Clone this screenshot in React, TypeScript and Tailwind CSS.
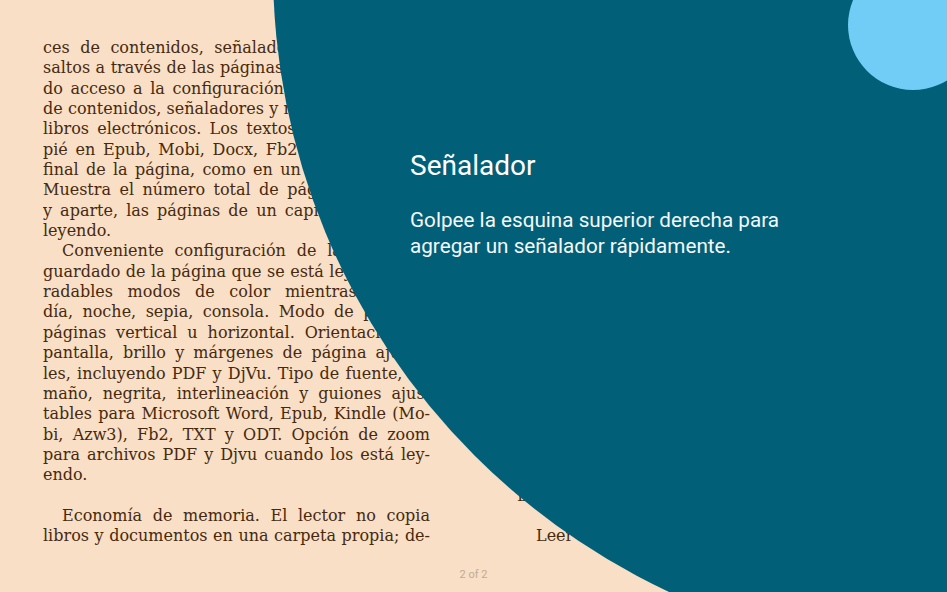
import React from "react";

type Line = { t: string; j?: boolean; indent?: boolean };

const leftLines: Line[] = [
  { t: "ces de contenidos, señaladores y notas. Los", j: true },
  { t: "saltos a través de las páginas y capítulos. Rápi-", j: true },
  { t: "do acceso a la configuración de lectura, tabla", j: true },
  { t: "de contenidos, señaladores y notas de todos los", j: true },
  { t: "libros electrónicos. Los textos de las notas al", j: true },
  { t: "pié en Epub, Mobi, Docx, Fb2 se muestran al", j: true },
  { t: "final de la página, como en un libro de papel.", j: true },
  { t: "Muestra el número total de páginas del libro", j: true },
  { t: "y aparte, las páginas de un capítulo que está", j: true },
  { t: "leyendo.", j: false },
  { t: "Conveniente configuración de la lectura y", j: true, indent: true },
  { t: "guardado de la página que se está leyendo. Ag-", j: true },
  { t: "radables modos de color mientras lee: el", j: true },
  { t: "día, noche, sepia, consola. Modo de paso de", j: true },
  { t: "páginas vertical u horizontal. Orientación de", j: true },
  { t: "pantalla, brillo y márgenes de página ajusta-", j: true },
  { t: "les, incluyendo PDF y DjVu. Tipo de fuente, ta-", j: true },
  { t: "maño, negrita, interlineación y guiones ajus-", j: true },
  { t: "tables para Microsoft Word, Epub, Kindle (Mo-", j: true },
  { t: "bi, Azw3), Fb2, TXT y ODT. Opción de zoom", j: true },
  { t: "para archivos PDF y Djvu cuando los está ley-", j: true },
  { t: "endo.", j: false },
  { t: "\u00a0", j: false },
  { t: "Economía de memoria. El lector no copia", j: true, indent: true },
  { t: "libros y documentos en una carpeta propia; de-", j: true },
];

const blank: Line = { t: "\u00a0", j: false };

const rightLines: Line[] = [
  ...Array.from({ length: 22 }, () => blank),
  { t: "Bajo consumo de batería.", j: false },
  blank,
  { t: "Leer libros nunca fue tan fácil y cómodo", j: true, indent: true },
];

function Column({ lines }: { lines: Line[] }) {
  return (
    <div className="w-[387px] shrink-0 flex flex-col">
      {lines.map((l, i) => (
        <div
          key={i}
          className={
            "h-[20.35px] leading-[20.35px] overflow-hidden whitespace-normal " +
            (l.j ? "text-justify [text-align-last:justify] " : "text-left ") +
            (l.indent ? "pl-[19px]" : "")
          }
        >
          {l.t}
        </div>
      ))}
    </div>
  );
}

export default function App() {
  return (
    <div className="relative w-[947px] h-[592px] overflow-hidden bg-[#f8dfc5]">
      <div
        className="flex gap-[87px] pl-[43px] pt-[38px] text-[16px] text-[#47290f]"
        style={{ fontFamily: '"DejaVu Serif", "Liberation Serif", serif' }}
      >
        <Column lines={leftLines} />
        <Column lines={rightLines} />
      </div>
      <div className="absolute left-0 right-0 bottom-[11px] text-center text-[11px] leading-[12px] text-[#c2ab95] font-['Roboto',sans-serif]">
        2 of 2
      </div>

      {/* Tutorial overlay */}
      <div className="absolute left-[273px] top-[-719px] w-[1376px] h-[1376px] rounded-full bg-[#015f78]" />
      <div className="absolute left-[848px] top-[-40px] w-[130px] h-[130px] rounded-full bg-[#71cdf5]" />
      <div className="absolute left-[410px] top-[152px] w-[430px] flex flex-col gap-[27px] text-white font-['Roboto',sans-serif]">
        <div className="text-[28px] leading-[28px]">Señalador</div>
        <div className="text-[20.7px] leading-[26px] text-[#f4f8fa]">
          Golpee la esquina superior derecha para
          <br />
          agregar un señalador rápidamente.
        </div>
      </div>
    </div>
  );
}
